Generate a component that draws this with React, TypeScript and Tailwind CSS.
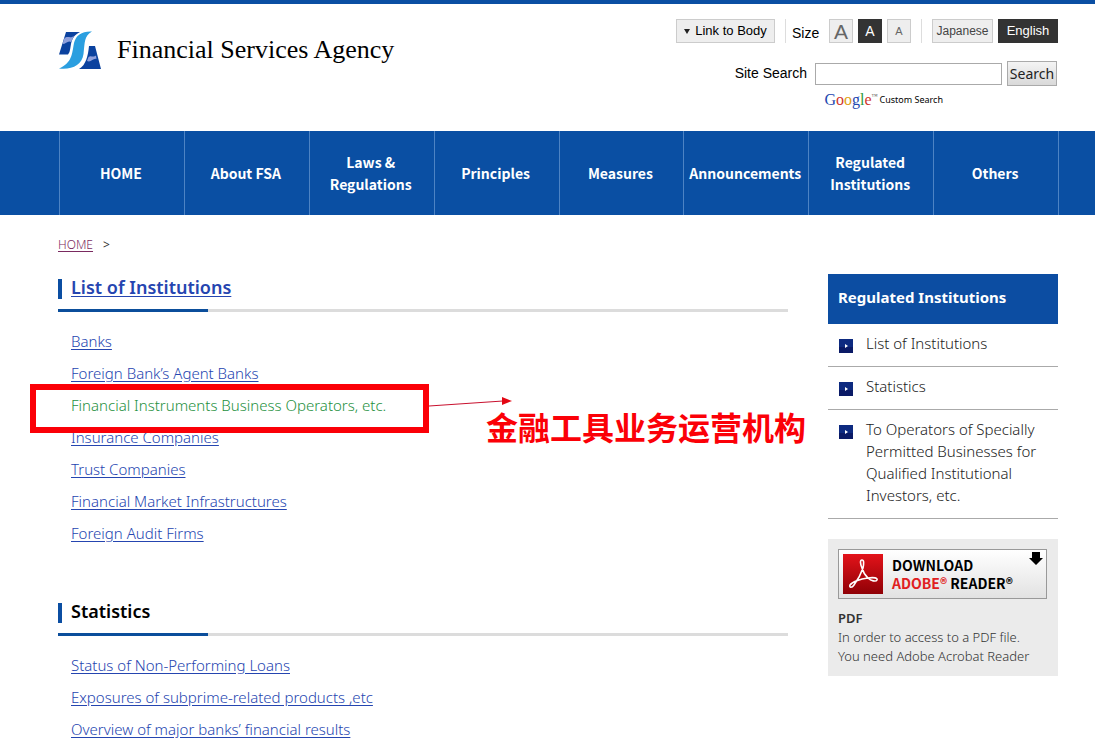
import type { ReactNode } from "react";

const navItems = [
  "HOME",
  "About FSA",
  "Laws & Regulations",
  "Principles",
  "Measures",
  "Announcements",
  "Regulated Institutions",
  "Others",
];

const institutionsBefore = ["Banks", "Foreign Bank’s Agent Banks"];
const institutionsAfter = [
  "Insurance Companies",
  "Trust Companies",
  "Financial Market Infrastructures",
  "Foreign Audit Firms",
];

const statistics = [
  "Status of Non-Performing Loans",
  "Exposures of subprime-related products ,etc",
  "Overview of major banks’ financial results",
];

const sideLinks = [
  "List of Institutions",
  "Statistics",
  "To Operators of Specially Permitted Businesses for Qualified Institutional Investors, etc.",
];

function Logo() {
  return (
    <svg viewBox="0 0 44 40" className="h-10 w-11 shrink-0" aria-hidden="true">
      <path d="M8 2H22C16 5 14 9 13 14C12 20 12 22 10 24.500H1Z" fill="#0b429f" />
      <path d="M6 9C9 5 12 9 16 6L13 12C10 10 8 14 4.500 14Z" fill="#8fa0dc" />
      <path d="M34 1.500C24 1 18 5 16 13C14 24 14 33 1 38.500C14 40 24 35 25.500 24C27 12 26 6 34 1.500Z" fill="#2b9fe0" />
      <path d="M31 16H37L43 39H21C28 35 30 26 31 16Z" fill="#0b429f" />
      <path d="M30.500 27C33 25 35 28 38 25.500L38.500 29C35 28 33 33 29 31Z" fill="#8fa0dc" />
    </svg>
  );
}

function TextLink({ children }: { children: ReactNode }) {
  return (
    <a href="#" className="text-[#2545b0] underline underline-offset-2">
      {children}
    </a>
  );
}

function SectionHeading({ children }: { children: ReactNode }) {
  return (
    <div>
      <div className="flex h-[35px] items-start gap-[9px] pt-px">
        <span className="mt-1 h-5 w-1 bg-[#0b4ea2]" />
        <h2 className="text-[18px] leading-6 font-semibold text-black">{children}</h2>
      </div>
      <div className="h-[3px] bg-[#dcdcdc]">
        <div className="h-full w-[150px] bg-[#0b4e9b]" />
      </div>
    </div>
  );
}

function Header() {
  return (
    <header className="flex h-[131px] items-start justify-between border-t-4 border-[#0a4fa3] pr-[37px] pl-[58px]">
      <a href="#" className="mt-[26px] flex items-center gap-[15px]">
        <Logo />
        <span className="font-['Liberation_Serif',serif] text-[26px] leading-10 text-black">
          Financial Services Agency
        </span>
      </a>
      <div className="flex flex-col items-end pt-[15px] font-['Liberation_Sans',sans-serif]">
        <div className="flex h-6 items-center text-black">
          <a href="#body" className="flex h-6 w-[99px] items-center justify-center gap-[5px] border border-[#ccc] bg-[#eee] text-[13px]">
            <svg viewBox="0 0 6 5" className="h-[5px] w-[6px]" aria-hidden="true">
              <path d="M0 0H6L3 5Z" fill="#222" />
            </svg>
            Link to Body
          </a>
          <span className="ml-[10px] h-6 w-px bg-[#ddd]" />
          <span className="ml-[6px] w-[30px] pt-1 text-[14px] leading-5">Size</span>
          <div className="ml-[7px] flex gap-[5px]">
            <button aria-label="Large text" className="flex size-6 items-center justify-center border border-[#ccc] bg-[#eee] text-[21px] leading-none text-[#666]">A</button>
            <button aria-label="Medium text" className="flex size-6 items-center justify-center bg-[#333] text-[14px] leading-none text-white">A</button>
            <button aria-label="Small text" className="flex size-6 items-center justify-center border border-[#ccc] bg-[#eee] text-[11px] leading-none text-[#666]">A</button>
          </div>
          <span className="ml-[10px] h-6 w-px bg-[#ddd]" />
          <button className="ml-[10px] h-6 w-[61px] border border-[#ccc] bg-[#eee] text-[12px] text-[#444]">Japanese</button>
          <button className="ml-[5px] h-6 w-[60px] bg-[#333] text-[13px] text-white">English</button>
        </div>
        <form className="mt-[18px] flex items-center" onSubmit={(e) => e.preventDefault()}>
          <label htmlFor="q" className="mr-2 text-[14px] text-black">Site Search</label>
          <input id="q" type="text" className="h-[22px] w-[187px] border border-[#aaa] bg-white px-1 text-[13px]" />
          <button
            type="submit"
            className="mr-px ml-[5px] h-[25px] w-[50px] border border-[#aaa] bg-linear-to-b from-[#f4f4f4] to-[#d9d9d9] font-['Noto_Sans',sans-serif] text-[14px] leading-5 text-[#222]"
          >
            Search
          </button>
        </form>
        <div className="mt-[5px] mr-[115px] flex items-center gap-[2px] text-black">
          <span className="flex font-['Liberation_Serif',serif] text-[16px] leading-[18px]">
            <span className="text-[#2448b0]">G</span>
            <span className="text-[#d0342c]">o</span>
            <span className="text-[#e0a010]">o</span>
            <span className="text-[#2448b0]">g</span>
            <span className="text-[#2c9a3c]">l</span>
            <span className="text-[#d0342c]">e</span>
            <span className="text-[6px] leading-[10px] text-[#555]">™</span>
          </span>
          <span className="font-['Noto_Sans',sans-serif] text-[9px]">Custom Search</span>
        </div>
      </div>
    </header>
  );
}

function MainNav() {
  return (
    <nav className="bg-[#0a4fa3] pr-9 pl-[59px]">
      <ul className="flex h-[84px] border-r border-[#4d83c4] font-['Noto_Sans_CJK_JP',sans-serif] text-[14px] leading-[22px] font-bold text-white">
        {navItems.map((item) => (
          <li key={item} className="min-w-0 flex-1 border-l border-[#4d83c4]">
            <a href="#" className="flex h-full items-center justify-center pr-[6px] pl-1 text-center">
              {item}
            </a>
          </li>
        ))}
      </ul>
    </nav>
  );
}

function Annotation() {
  return (
    <>
      <span className="pointer-events-none absolute -top-[10px] -left-[41px] h-[49px] w-[399px] border-[6px] border-[#fb0007]" />
      <svg viewBox="0 0 84 12" className="absolute top-[2px] left-[358px] h-3 w-[84px]" aria-hidden="true">
        <path d="M0 10L74 5" stroke="#c8102e" strokeWidth="1" />
        <path d="M73 1L83 5L73 9Z" fill="#e30613" />
      </svg>
      <span className="absolute top-3 left-[415px] font-['Noto_Sans_CJK_SC',sans-serif] text-[32px] leading-10 font-bold whitespace-nowrap text-[#fb0007]">
        金融工具业务运营机构
      </span>
    </>
  );
}

function AcrobatIcon() {
  return (
    <svg viewBox="0 0 40 40" className="size-10 shrink-0" aria-hidden="true">
      <defs>
        <linearGradient id="acro" x1="0" y1="0" x2="0" y2="1">
          <stop offset="0" stopColor="#e3131a" />
          <stop offset="1" stopColor="#8f0006" />
        </linearGradient>
      </defs>
      <rect width="40" height="40" fill="url(#acro)" />
      <path
        d="M19 14C17 9 17 6 19 6C21 6 21 9 20 14C18 20 14 27 11 31C9 34 6 34 7 31C9 28 17 25 25 24C31 23 35 24 34 26C33 28 28 27 25 24C22 21 20 18 19 14Z"
        fill="none"
        stroke="#fff"
        strokeWidth="1.6"
      />
    </svg>
  );
}

function Sidebar() {
  return (
    <aside className="w-[230px] shrink-0">
      <h2 className="flex h-[50px] items-center bg-[#0c4da2] px-[10px] pb-[3px] text-[15px] font-bold text-white">
        Regulated Institutions
      </h2>
      <ul>
        {sideLinks.map((label) => (
          <li key={label} className="border-b border-[#aaa]">
            <a href="#" className="flex items-start gap-[13px] pt-2 pr-2 pb-3 pl-[11px] text-[15px] leading-[22px] font-light text-[#222]">
              <svg viewBox="0 0 14 14" className="mt-[7px] size-[14px] shrink-0" aria-hidden="true">
                <rect width="14" height="14" fill="#0d2a80" />
                <rect y="8" width="14" height="6" fill="#0a1a66" />
                <path d="M6 5L9 7L6 9Z" fill="#fff" />
              </svg>
              <span>{label}</span>
            </a>
          </li>
        ))}
      </ul>
      <div className="mt-5 bg-[#ebebeb] p-[10px] text-[13px] leading-[19px] text-[#333]">
        <a
          href="#"
          className="mr-px flex h-[50px] items-center border border-[#999] bg-linear-to-b from-white to-[#e2e2e2] pl-1 font-['Noto_Sans_CJK_JP',sans-serif] text-[14px] leading-[18px] font-bold text-black"
        >
          <AcrobatIcon />
          <span className="ml-[9px] flex-1 whitespace-nowrap">
            <span className="block">DOWNLOAD</span>
            <span className="block">
              <span className="text-[#e02020]">ADOBE®</span> READER®
            </span>
          </span>
          <svg viewBox="0 0 14 14" className="mt-[2px] mr-[3px] size-[14px] shrink-0 self-start" aria-hidden="true">
            <path d="M3 0H11V6H14L7 13L0 6H3Z" fill="#000" />
          </svg>
        </a>
        <h3 className="mt-[10px] font-semibold">PDF</h3>
        <p className="font-light">In order to access to a PDF file.</p>
        <p className="font-light">You need Adobe Acrobat Reader</p>
      </div>
    </aside>
  );
}

export default function App() {
  return (
    <div className="bg-white font-['Noto_Sans',sans-serif]">
      <Header />
      <MainNav />
      <div className="pr-[37px] pl-[58px]">
        <div className="flex h-[59px] items-center gap-[10px] text-[12px] text-[#333]">
          <a href="#" className="font-light text-[#7a2a60] underline underline-offset-2">HOME</a>
          <span>&gt;</span>
        </div>
        <div id="body" className="flex items-start gap-10">
          <main className="min-w-0 flex-1">
            <section>
              <SectionHeading>
                <TextLink>List of Institutions</TextLink>
              </SectionHeading>
              <ul className="mt-[18px] ml-[13px] flex flex-col gap-[10px] text-[15px] leading-[22px] font-light">
                {institutionsBefore.map((t) => (
                  <li key={t}>
                    <TextLink>{t}</TextLink>
                  </li>
                ))}
                <li className="relative">
                  <a href="#" className="text-[#259040]">Financial Instruments Business Operators, etc.</a>
                  <Annotation />
                </li>
                {institutionsAfter.map((t) => (
                  <li key={t}>
                    <TextLink>{t}</TextLink>
                  </li>
                ))}
              </ul>
            </section>
            <section className="mt-[54px]">
              <SectionHeading>Statistics</SectionHeading>
              <ul className="mt-[18px] ml-[13px] flex flex-col gap-[10px] text-[15px] leading-[22px] font-light">
                {statistics.map((t) => (
                  <li key={t}>
                    <TextLink>{t}</TextLink>
                  </li>
                ))}
              </ul>
            </section>
          </main>
          <Sidebar />
        </div>
      </div>
    </div>
  );
}
